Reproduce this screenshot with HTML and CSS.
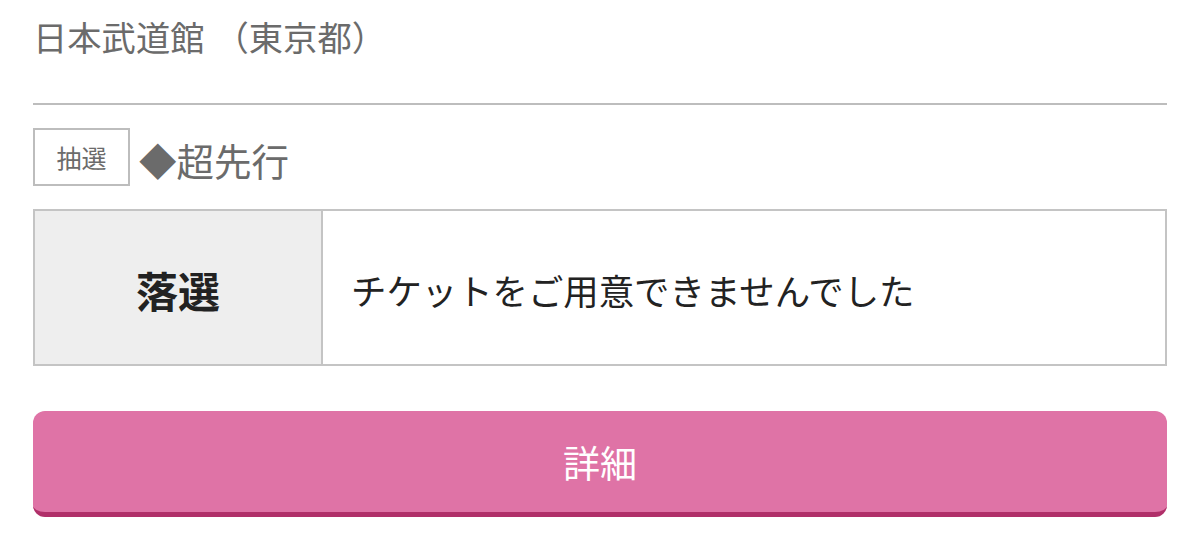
FILE: index.html
```html
<!DOCTYPE html>
<html lang="ja">
<head>
<meta charset="utf-8">
<link rel="stylesheet" href="styles.css">
</head>
<body>
<div class="page">
  <div class="venue">日本武道館<span class="venue-pref">（東京都）</span></div>
  <div class="sale-row">
    <span class="tag">抽選</span>
    <span class="sale-name">◆超先行</span>
  </div>
  <div class="result">
    <div class="result-label">落選</div>
    <div class="result-text">チケットをご用意できませんでした</div>
  </div>
  <button class="detail-btn">詳細</button>
</div>
</body>
</html>
```

FILE: styles.css
```css
html, body {
  margin: 0;
  padding: 0;
  background: #ffffff;
}
body {
  font-family: "Noto Sans CJK JP", "Noto Sans", sans-serif;
  text-spacing-trim: space-all;
}
.page {
  padding: 0 33px;
}
.venue {
  padding-top: 16px;
  padding-bottom: 47px;
  line-height: 40px;
  font-size: 34.3px;
  color: #6b6b6b;
  border-bottom: 2px solid #bdbdbd;
}
.venue-pref {
  margin-left: 10px;
}
.sale-row {
  display: flex;
  align-items: center;
  margin-top: 23px;
  gap: 9px;
}
.tag {
  box-sizing: border-box;
  width: 97px;
  height: 58px;
  border: 2px solid #bdbdbd;
  display: flex;
  align-items: center;
  justify-content: center;
  font-size: 25px;
  color: #6b6b6b;
}
.sale-name {
  font-size: 37.5px;
  line-height: 40px;
  color: #6b6b6b;
  padding-top: 5px;
}
.result {
  margin-top: 23px;
  box-sizing: border-box;
  height: 157px;
  border: 2px solid #c4c4c4;
  display: flex;
}
.result-label {
  width: 286px;
  flex: none;
  background: #eeeeee;
  border-right: 2px solid #c4c4c4;
  display: flex;
  align-items: center;
  justify-content: center;
  font-size: 42px;
  font-weight: 700;
  color: #222222;
  padding-top: 4px;
}
.result-text {
  display: flex;
  align-items: center;
  padding-left: 28px;
  padding-top: 4px;
  font-size: 35.4px;
  color: #222222;
}
.detail-btn {
  display: block;
  box-sizing: border-box;
  width: 100%;
  margin-top: 45px;
  height: 106px;
  border: none;
  border-bottom: 5px solid #b02f69;
  border-radius: 12px;
  background: #df73a6;
  color: #ffffff;
  font-family: "Noto Sans CJK JP", "Noto Sans", sans-serif;
  font-size: 37px;
  padding: 0;
  cursor: pointer;
}
```
